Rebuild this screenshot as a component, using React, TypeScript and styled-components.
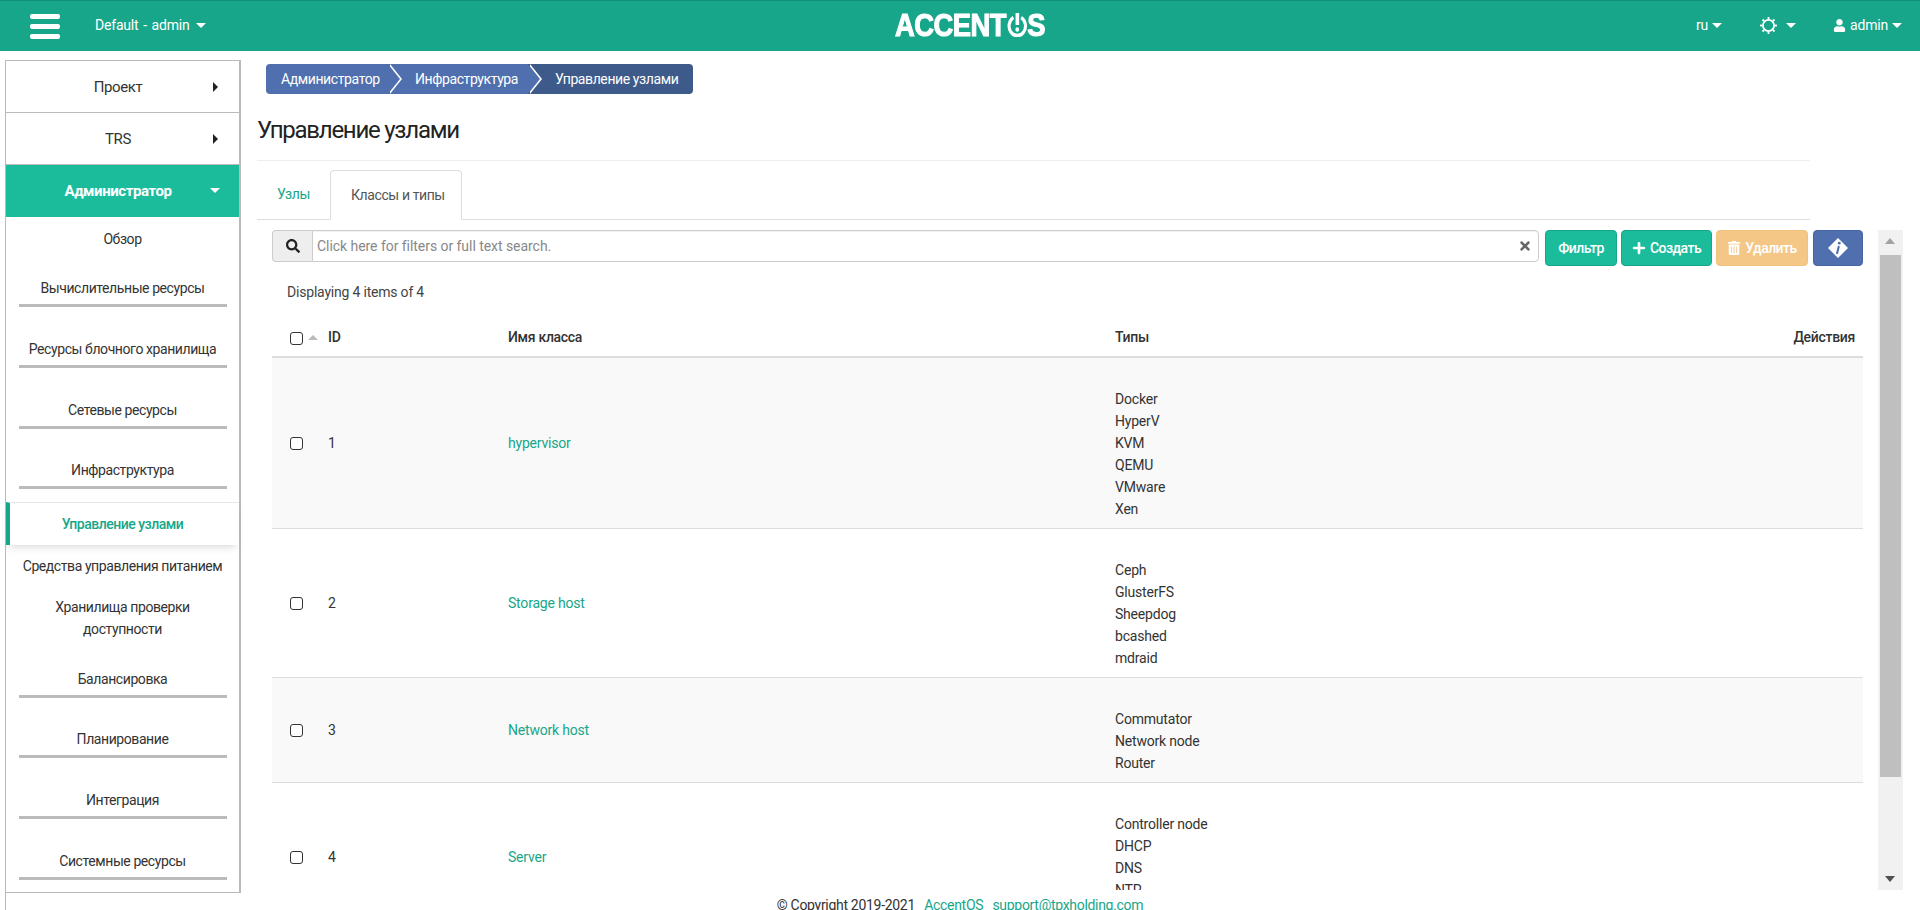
import React from 'react';
import styled, { createGlobalStyle } from 'styled-components';
import { FaSearch, FaTimes, FaPlus, FaTrashAlt, FaUser } from 'react-icons/fa';

const Global = createGlobalStyle`
  html, body { margin: 0; padding: 0; height: 910px; overflow: hidden; background: #fff; }
  body { font-family: Roboto, "Liberation Sans", sans-serif; font-size: 14px; line-height: 22px; color: #333; letter-spacing: -0.2px; }
  * { box-sizing: border-box; }
`;

const Page = styled.div`display: flex; flex-direction: column; height: 910px; overflow: hidden;`;

const TopBar = styled.header`
  height: 51px; flex: none; background: #17a689; border-top: 1px solid #138f76; color: #fff;
  display: flex; align-items: center; position: relative;
`;
const Burger = styled.div`
  margin-left: 30px; width: 30px; display: flex; flex-direction: column; gap: 5px;
  span { display: block; height: 5px; border-radius: 2px; background: #fff; }
`;
const Project = styled.div`margin-left: 35px; padding-bottom: 2px; display: flex; align-items: center; gap: 6px; font-size: 14px; word-spacing: 1.5px;`;
const Caret = styled.i<{ $size?: number; $color?: string }>`
  display: inline-block; width: 0; height: 0;
  border-left: ${p => p.$size ?? 5.5}px solid transparent; border-right: ${p => p.$size ?? 5.5}px solid transparent;
  border-top: ${p => p.$size ?? 5.5}px solid ${p => p.$color ?? '#fff'};
`;
const Logo = styled.div`
  position: absolute; left: 895px; top: 12px; height: 24px; display: flex; align-items: center;
  font-family: "Liberation Sans", sans-serif; font-weight: 700; font-size: 32px; letter-spacing: -0.6px; color: #fff;
  line-height: 24px; transform: scaleX(0.855); transform-origin: left center;
  -webkit-text-stroke: 1.1px #fff;
  span { display: inline-block; }
  svg { margin: 0 0 0 1px; }
`;
const TopRight = styled.div`margin-left: auto; display: flex; align-items: center; padding: 0 18px 2px 0; font-size: 14px;`;
const TopItem = styled.div<{ $ml: number }>`
  margin-left: ${p => p.$ml}px; display: flex; align-items: center; gap: 4px;
`;

const Body = styled.div`flex: none; height: 839px; display: flex; align-items: flex-start;`;

const Sidebar = styled.nav`
  flex: none; width: 236px; margin: 9px 0 0 5px; border: 1px solid #bbb; border-right-width: 2px; border-top-width: 1px;
  background: #fff; position: relative; z-index: 2; text-align: center; letter-spacing: -0.42px;
`;
const TopNav = styled.div<{ $open?: boolean }>`
  height: 52px; display: flex; align-items: center; position: relative;
  justify-content: flex-start; font-size: 15px;
  border-bottom: 1px solid ${p => (p.$open ? '#1abc9c' : '#bbb')};
  background: ${p => (p.$open ? '#1abc9c' : '#fff')};
  color: ${p => (p.$open ? '#fff' : '#333')};
  b { font-weight: ${p => (p.$open ? 700 : 400)}; width: 224px; }
`;
const RightCaret = styled.i`
  position: absolute; left: 207px; top: 50%; margin-top: -5px; width: 0; height: 0;
  border-top: 5px solid transparent; border-bottom: 5px solid transparent; border-left: 5px solid #222;
`;
const CaretSlot = styled.span`position: absolute; left: 204px; top: 50%; margin-top: -3px; display: flex;`;

const SubItem = styled.div<{ $pt?: number; $pb?: number }>`
  padding: ${p => p.$pt ?? 0}px 8px ${p => p.$pb ?? 0}px; font-size: 14px; color: #333; line-height: 22px;
`;
const SubGroup = styled.div<{ $mb: number }>`
  margin-bottom: ${p => p.$mb}px; font-size: 14px; color: #333; line-height: 22px;
  &::after { content: ''; display: block; height: 3px; background: #bbb; margin: 5px 12px 0 13px; }
`;
const ActiveSub = styled.div`
  height: 43px; border-top: 1px solid #e6e6e6; border-left: 4px solid #17a689; color: #17a689; font-weight: 500;
  display: flex; align-items: center; justify-content: center; padding: 0 4px 0 0; letter-spacing: -0.5px;
  box-shadow: 0 5px 8px -3px rgba(0,0,0,.15); background: #fff;
`;

const Main = styled.main`flex: 1; min-width: 0; padding-left: 16px;`;
const Crumbs = styled.div`margin: 13px 0 0 9px; height: 30px; display: flex; letter-spacing: -0.4px;`;
const Crumb = styled.div<{ $last?: boolean; $first?: boolean; $w: number }>`
  width: ${p => p.$w}px; height: 30px; position: relative; color: #fff; font-size: 14px; line-height: 30px;
  background: ${p => (p.$last ? '#3e5a8a' : '#4f6fae')};
  padding-left: ${p => (p.$first ? 15 : 27)}px; white-space: nowrap;
  border-radius: ${p => (p.$first ? '4px 0 0 4px' : p.$last ? '0 4px 4px 0' : '0')};
  ${p => p.$last ? '' : `&::after {
    content: ''; position: absolute; z-index: 1; right: -12px; top: 0; width: 0; height: 0;
    border-top: 15px solid transparent; border-bottom: 15px solid transparent;
    border-left: 12px solid #4f6fae;
    filter: drop-shadow(2px 0 0 #fff);
  }`}
`;
const Title = styled.h1`
  margin: 22px 0 0 0; height: 45px; width: 1553px; font-size: 24px; font-weight: 400; color: #222; line-height: 28px;
  border-bottom: 1px solid #eee; padding: 0; letter-spacing: -1.25px;
`;
const Tabs = styled.div`margin-top: 8px; width: 1553px; height: 51px; display: flex; border-bottom: 1px solid #ddd; align-items: flex-end; letter-spacing: -0.4px;`;
const Tab = styled.div<{ $active?: boolean; $w: number }>`
  width: ${p => p.$w}px; height: 50px; padding: ${p => (p.$active ? 13 : 14)}px 0 0 20px;
  font-size: 14px; color: ${p => (p.$active ? '#555' : '#17a689')}; white-space: nowrap;
  ${p => p.$active ? 'background:#fff;border:1px solid #ddd;border-bottom-color:#fff;border-radius:4px 4px 0 0;margin-bottom:-1px;' : ''}
`;

const Panel = styled.div`margin: 10px 0 0 15px; height: 660px; display: flex; align-items: stretch;`;
const Content = styled.div`width: 1591px; flex: none; overflow: hidden;`;
const Toolbar = styled.div`display: flex; height: 36px; align-items: flex-start;`;
const SearchAddon = styled.div`
  width: 40px; height: 32px; background: #eee; border: 1px solid #ccc; border-right: 0; border-radius: 4px 0 0 4px;
  display: flex; align-items: center; justify-content: center; color: #222; font-size: 14px;
`;
const SearchBox = styled.div`
  width: 1227px; height: 32px; border: 1px solid #ccc; border-radius: 0 4px 4px 0; padding: 0 5px 0 4px;
  display: flex; align-items: center; justify-content: space-between; color: #888; font-size: 14px; letter-spacing: -0.05px;
  box-shadow: inset 0 1px 1px rgba(0,0,0,.06);
  svg { color: #666; margin-right: 1px; }
`;
const Btn = styled.div<{ $bg: string; $bd: string; $w: number; $ml?: number }>`
  width: ${p => p.$w}px; height: 36px; margin-left: ${p => p.$ml ?? 4}px; background: ${p => p.$bg};
  border: 1px solid ${p => p.$bd}; border-radius: 4px; color: #fff; font-size: 14px; font-weight: 500; letter-spacing: -0.55px;
  display: flex; align-items: center; justify-content: center; gap: 4px;
`;
const Count = styled.div`margin: 15px 0 0 15px; height: 22px; color: #444;`;

const Table = styled.table`width: 100%; border-collapse: separate; border-spacing: 0; table-layout: fixed;`;
const Th = styled.th<{ $right?: boolean }>`
  height: 53px; padding: 23px ${p => (p.$right ? 8 : 0)}px 8px 0; text-align: ${p => (p.$right ? 'right' : 'left')};
  font-weight: 500; color: #333; border-bottom: 2px solid #ddd; vertical-align: top; font-size: 14px; letter-spacing: -0.3px;
`;
const Tr = styled.tr<{ $odd?: boolean }>`background: ${p => (p.$odd ? '#f9f9f9' : '#fff')};`;
const Td = styled.td`padding: 0; border-bottom: 1px solid #ddd; vertical-align: middle; color: #333;`;
const CheckCell = styled.div`display: flex; align-items: center; padding-left: 18px; gap: 5px;`;
const HeadCheck = styled(CheckCell)`height: 22px; padding-top: 7px; align-items: flex-start; margin-top: -1px;`;
const Check = styled.span`display: block; width: 13px; height: 13px; border: 1.5px solid #333; border-radius: 3px; background: #fff;`;
const SortUp = styled.i`
  display: block; width: 0; height: 0; margin-top: 3px; border-left: 5px solid transparent; border-right: 5px solid transparent;
  border-bottom: 5px solid #bbb;
`;
const Link = styled.a`color: #17a689;`;
const TypeList = styled.div`padding: 30px 0 8px; color: #333;`;

const Scroll = styled.div`
  width: 25px; margin-left: 15px; flex: none; background: #f1f1f1; padding: 0 2px; display: flex; flex-direction: column; position: relative;
`;
const ScrollUp = styled.i`
  position: absolute; top: 8px; left: 7px; width: 0; height: 0; border-left: 5px solid transparent; border-right: 5px solid transparent; border-bottom: 6px solid #a3a3a3;
`;
const ScrollDown = styled.i`
  position: absolute; bottom: 8px; left: 7px; width: 0; height: 0; border-left: 5px solid transparent; border-right: 5px solid transparent; border-top: 6px solid #505050;
`;
const Thumb = styled.div`margin-top: 25px; height: 522px; background: #bfbfbf;`;

const Footer = styled.footer`
  flex: 1; margin-left: 5px; border-left: 1px solid #bbb; padding: 4px 6px 0 0; text-align: center; color: #333;
  letter-spacing: -0.3px;
  a { color: #17a689; margin-left: 6px; }
`;

const Gear = () => (
  <svg width="17" height="17" viewBox="0 0 17 17">
    <circle cx="8.5" cy="8.5" r="5.6" fill="none" stroke="#fff" strokeWidth="1.8" />
    <g fill="#fff">
      {[0, 45, 90, 135, 180, 225, 270, 315].map(a => (
        <rect key={a} x="7.6" y="0" width="1.8" height="2.4" transform={`rotate(${a} 8.5 8.5)`} />
      ))}
    </g>
  </svg>
);
const Power = () => (
  <svg width="24" height="24" viewBox="0 0 24 24">
    <path d="M7.5 4.5A9.6 9.6 0 1 0 16.5 4.5" fill="none" stroke="#fff" strokeWidth="3.6" />
    <rect x="10" y="0" width="4.2" height="12" fill="#fff" />
    <circle cx="12" cy="16.5" r="2.2" fill="#fff" />
  </svg>
);
const InfoIcon = () => (
  <svg width="20" height="20" viewBox="0 0 20 20">
    <polygon points="10,0 20,10 10,20 0,10" fill="#fff" />
    <circle cx="11.3" cy="5.2" r="1.4" fill="#4f6fae" />
    <path d="M10.7 8.8 L9.1 15.2" stroke="#4f6fae" strokeWidth="2.1" strokeLinecap="round" />
  </svg>
);

const rows = [
  { id: 1, name: 'hypervisor', types: ['Docker', 'HyperV', 'KVM', 'QEMU', 'VMware', 'Xen'] },
  { id: 2, name: 'Storage host', types: ['Ceph', 'GlusterFS', 'Sheepdog', 'bcashed', 'mdraid'] },
  { id: 3, name: 'Network host', types: ['Commutator', 'Network node', 'Router'] },
  { id: 4, name: 'Server', types: ['Controller node', 'DHCP', 'DNS', 'NTP', 'PXE'] },
];

export default function App() {
  return (
    <Page>
      <Global />
      <TopBar>
        <Burger><span /><span /><span /></Burger>
        <Project>Default - admin <Caret /></Project>
        <Logo><span>ACCENT</span><Power /><span>S</span></Logo>
        <TopRight>
          <TopItem $ml={0}>ru <Caret /></TopItem>
          <TopItem $ml={38}><Gear /><Caret style={{ marginLeft: 5 }} /></TopItem>
          <TopItem $ml={37}><FaUser size={13} /> admin <Caret /></TopItem>
        </TopRight>
      </TopBar>
      <Body>
        <Sidebar>
          <TopNav><b>Проект</b><RightCaret /></TopNav>
          <TopNav><b>TRS</b><RightCaret /></TopNav>
          <TopNav $open><b>Администратор</b><CaretSlot><Caret $size={5.5} /></CaretSlot></TopNav>
          <SubItem $pt={11} $pb={27}>Обзор</SubItem>
          <SubGroup $mb={31}>Вычислительные ресурсы</SubGroup>
          <SubGroup $mb={31}>Ресурсы блочного хранилища</SubGroup>
          <SubGroup $mb={30}>Сетевые ресурсы</SubGroup>
          <SubGroup $mb={13}>Инфраструктура</SubGroup>
          <ActiveSub>Управление узлами</ActiveSub>
          <SubItem $pt={10} $pb={19}>Средства управления питанием</SubItem>
          <SubItem $pb={28}>Хранилища проверки<br />доступности</SubItem>
          <SubGroup $mb={30}>Балансировка</SubGroup>
          <SubGroup $mb={31}>Планирование</SubGroup>
          <SubGroup $mb={31}>Интеграция</SubGroup>
          <SubGroup $mb={12}>Системные ресурсы</SubGroup>
        </Sidebar>
        <Main>
          <Crumbs>
            <Crumb $first $w={122}>Администратор</Crumb>
            <Crumb $w={140}>Инфраструктура</Crumb>
            <Crumb $last $w={165}>Управление узлами</Crumb>
          </Crumbs>
          <Title>Управление узлами</Title>
          <Tabs>
            <Tab $w={73}>Узлы</Tab>
            <Tab $active $w={132}>Классы и типы</Tab>
          </Tabs>
          <Panel>
            <Content>
              <Toolbar>
                <SearchAddon><FaSearch size={14} /></SearchAddon>
                <SearchBox>Click here for filters or full text search.<FaTimes size={14} /></SearchBox>
                <Btn $bg="#1abc9c" $bd="#18a689" $w={72} $ml={6}>Фильтр</Btn>
                <Btn $bg="#1abc9c" $bd="#18a689" $w={91}><FaPlus size={14} />Создать</Btn>
                <Btn $bg="#f5c787" $bd="#f3c17c" $w={92}><FaTrashAlt size={14} />Удалить</Btn>
                <Btn $bg="#4f6fae" $bd="#46659f" $w={50} $ml={5}><InfoIcon /></Btn>
              </Toolbar>
              <Count>Displaying 4 items of 4</Count>
              <Table>
                <colgroup>
                  <col style={{ width: 56 }} />
                  <col style={{ width: 180 }} />
                  <col style={{ width: 607 }} />
                  <col />
                  <col style={{ width: 120 }} />
                </colgroup>
                <thead>
                  <tr>
                    <Th><HeadCheck><Check /><SortUp /></HeadCheck></Th>
                    <Th>ID</Th>
                    <Th>Имя класса</Th>
                    <Th>Типы</Th>
                    <Th $right>Действия</Th>
                  </tr>
                </thead>
                <tbody>
                  {rows.map((r, i) => (
                    <Tr key={r.id} $odd={i % 2 === 0}>
                      <Td><CheckCell><Check /></CheckCell></Td>
                      <Td>{r.id}</Td>
                      <Td><Link>{r.name}</Link></Td>
                      <Td><TypeList>{r.types.map(t => <div key={t}>{t}</div>)}</TypeList></Td>
                      <Td />
                    </Tr>
                  ))}
                </tbody>
              </Table>
            </Content>
            <Scroll>
              <ScrollUp />
              <Thumb />
              <ScrollDown />
            </Scroll>
          </Panel>
        </Main>
      </Body>
      <Footer>© Copyright 2019-2021 <a>AccentOS</a> <a>support@tpxholding.com</a></Footer>
    </Page>
  );
}
